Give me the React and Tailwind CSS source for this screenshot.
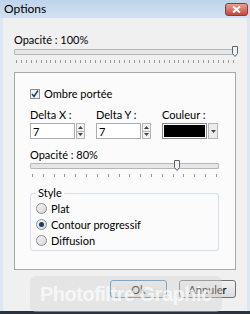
import React from "react";

const font = { fontFamily: 'Lato, "Noto Sans", sans-serif' };

function Thumb() {
  return (
    <svg width="6" height="11" viewBox="0 0 6 11" className="block">
      <path d="M0.5 0.5 H5.5 V7.5 L3 10.5 L0.5 7.5 Z" fill="#eef2f6" stroke="#5a6470" strokeWidth="1" />
    </svg>
  );
}

function Slider({ width, pos, ticks }) {
  return (
    <div className="flex flex-col" style={{ width }}>
      <div className="relative h-[6px] border border-[#b7b7b7] bg-[#e6e6e6] rounded-[1px]">
        <div className="absolute top-[-4px]" style={{ left: pos }}>
          <Thumb />
        </div>
      </div>
      <div className="flex justify-between mt-[5px] px-[2px] h-[3px]">
        {Array.from({ length: ticks }).map((_, i) => (
          <div key={i} className="w-px h-[3px] bg-[#9a9a9a]" />
        ))}
      </div>
    </div>
  );
}

function Spinner() {
  return (
    <div className="flex flex-col w-[9px] h-[16px] border border-[#b5b5b5] bg-[#f2f2f2]">
      <div className="flex-1 flex items-center justify-center border-b border-[#b5b5b5]">
        <svg width="5" height="3" viewBox="0 0 5 3"><path d="M0 3 L2.5 0 L5 3 Z" fill="#444" /></svg>
      </div>
      <div className="flex-1 flex items-center justify-center">
        <svg width="5" height="3" viewBox="0 0 5 3"><path d="M0 0 L2.5 3 L5 0 Z" fill="#444" /></svg>
      </div>
    </div>
  );
}

function NumField({ value }) {
  return (
    <div className="flex items-center gap-[1px]">
      <div className="w-[45px] h-[16px] border border-[#abadb3] bg-white flex items-center pl-[2px] text-[11px] leading-none text-black">
        {value}
      </div>
      <Spinner />
    </div>
  );
}

function Radio({ checked, label }) {
  return (
    <div className="flex items-center gap-[4px] h-[16px]">
      <div className="w-[11px] h-[11px] rounded-full border border-[#8e8f8f] bg-gradient-to-br from-[#f4f4f4] to-[#d8d8d8] flex items-center justify-center">
        {checked && <div className="w-[5px] h-[5px] rounded-full bg-[#1d3e64]" />}
      </div>
      <span className="text-[11px] leading-none text-black">{label}</span>
    </div>
  );
}

export default function App() {
  return (
    <div className="w-[250px] h-[314px] flex flex-col bg-[#f0f0f0] overflow-hidden" style={font}>
      {/* title bar */}
      <div className="h-[18px] flex items-center justify-between bg-gradient-to-b from-[#bfd3eb] to-[#d3e1f1] pl-[4px] pr-[2px]">
        <span className="text-[12px] leading-none text-black">Options</span>
        <div className="w-[23px] h-[13px] rounded-[3px] border border-[#8a3b3b] bg-gradient-to-b from-[#e6a092] to-[#c4473a] flex items-center justify-center">
          <svg width="9" height="7" viewBox="0 0 9 7">
            <path d="M1 0.5 L8 6.5 M8 0.5 L1 6.5" stroke="white" strokeWidth="2" />
          </svg>
        </div>
      </div>

      {/* body */}
      <div className="flex-1 flex flex-col border-l-[3px] border-r-[3px] border-[#dce7f4] bg-[#f0f0f0] px-[11px] relative">
        <div className="mt-[16px] text-[11px] leading-[12px] text-black">Opacité : 100%</div>
        <div className="mt-[3px]">
          <Slider width={222} pos={217} ticks={45} />
        </div>

        {/* panel */}
        <div className="mt-[9px] h-[198px] border border-[#a8a8a8] bg-[#fbfbfb] flex flex-col pl-[15px] pr-[16px]">
          <div className="mt-[15px] flex items-center gap-[4px]">
            <div className="w-[10px] h-[10px] border border-[#8e8f8f] bg-[#eef3f8] flex items-center justify-center">
              <svg width="8" height="8" viewBox="0 0 8 8">
                <path d="M1 4 L3 6.5 L7 0.5" stroke="#1d3e64" strokeWidth="1.5" fill="none" />
              </svg>
            </div>
            <span className="text-[11px] leading-none text-black">Ombre portée</span>
          </div>

          <div className="mt-[10px] flex gap-[11px]">
            <div className="flex flex-col gap-[2px]">
              <span className="text-[11px] leading-[12px] text-black">Delta X :</span>
              <NumField value="7" />
            </div>
            <div className="flex flex-col gap-[2px]">
              <span className="text-[11px] leading-[12px] text-black">Delta Y :</span>
              <NumField value="7" />
            </div>
            <div className="flex flex-col gap-[2px]">
              <span className="text-[11px] leading-[12px] text-black">Couleur :</span>
              <div className="flex items-center gap-[1px] h-[16px]">
                <div className="w-[45px] h-[16px] border border-[#8b8b8b] p-[1px] bg-white">
                  <div className="w-full h-full bg-black" />
                </div>
                <div className="w-[10px] h-[16px] border border-[#b5b5b5] bg-[#ececec] flex items-center justify-center">
                  <svg width="5" height="3" viewBox="0 0 5 3"><path d="M0 0 L2.5 3 L5 0 Z" fill="#444" /></svg>
                </div>
              </div>
            </div>
          </div>

          <div className="mt-[10px] text-[11px] leading-[12px] text-black">Opacité : 80%</div>
          <div className="mt-[2px]">
            <Slider width={189} pos={143} ticks={18} />
          </div>

          {/* Style groupbox */}
          <div className="relative mt-[16px] h-[58px] border border-[#d5dfe5] rounded-[3px] flex flex-col pl-[5px] pt-[6px]">
            <span className="absolute top-[-7px] left-[5px] px-[2px] bg-[#fbfbfb] text-[11px] leading-[12px] text-black">Style</span>
            <Radio label="Plat" />
            <Radio checked label="Contour progressif" />
            <Radio label="Diffusion" />
          </div>
        </div>

        {/* buttons */}
        <div className="mt-[10px] flex justify-end gap-[12px]">
          <div className="w-[57px] h-[18px] rounded-[3px] border border-[#3c7fb1] bg-gradient-to-b from-[#f2f2f2] to-[#dcdcdc] flex items-center justify-center text-[11px] leading-none text-black">
            Ok
          </div>
          <div className="w-[57px] h-[18px] rounded-[3px] border border-[#707070] bg-gradient-to-b from-[#f2f2f2] to-[#dcdcdc] flex items-center justify-center text-[11px] leading-none text-black">
            Annuler
          </div>
        </div>

        {/* watermark */}
        <div className="absolute left-[27px] top-[258px] w-[192px] h-[36px] rounded-[6px] bg-[#d8d8d8]/45 flex items-center pl-[10px]">
          <span className="text-[20px] font-bold leading-none text-white/70 tracking-tight" style={{ fontFamily: '"Liberation Sans", Arial, sans-serif' }}>
            Photofiltre Graphic
          </span>
        </div>
      </div>
      <div className="h-[3px] bg-[#2a3440]" />
    </div>
  );
}
